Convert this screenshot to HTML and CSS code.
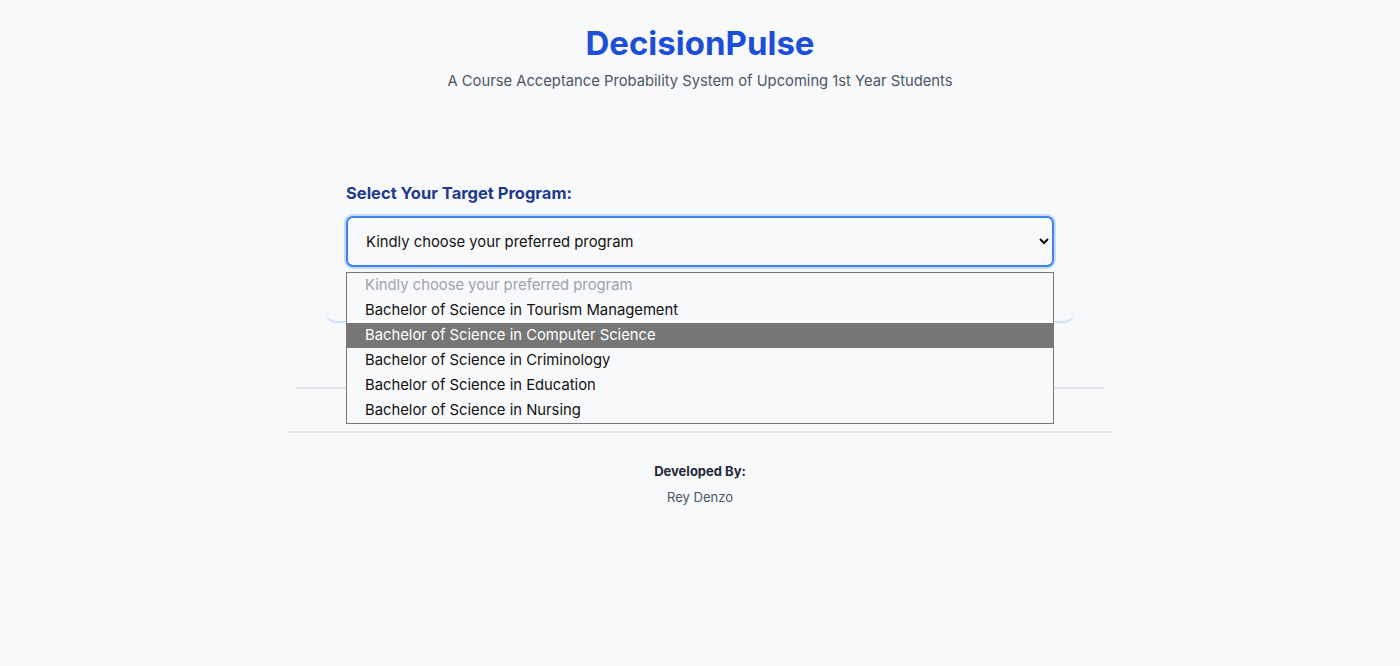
FILE: index.html
```html
<!DOCTYPE html>
<html lang="en">
<head>
    <meta charset="UTF-8">
    <meta name="viewport" content="width=device-width, initial-scale=1.0">
    <title>DecisionPulse</title>
    <link rel="stylesheet" href="styles.css">
</head>
<body>
    <header class="header">
        <h1 class="title">DecisionPulse</h1>
        <p class="subtitle">A Course Acceptance Probability System of Upcoming 1st Year Students</p>
    </header>

    <main class="container">
        <div class="form-card">
            <label class="field-label" for="program">Select Your Target Program:</label>
            <div class="select-wrap">
                <select class="program-select" id="program">
                    <option>Kindly choose your preferred program</option>
                    <option>Bachelor of Science in Tourism Management</option>
                    <option>Bachelor of Science in Computer Science</option>
                    <option>Bachelor of Science in Criminology</option>
                    <option>Bachelor of Science in Education</option>
                    <option>Bachelor of Science in Nursing</option>
                </select>
                <ul class="program-list">
                    <li class="placeholder">Kindly choose your preferred program</li>
                    <li>Bachelor of Science in Tourism Management</li>
                    <li class="active">Bachelor of Science in Computer Science</li>
                    <li>Bachelor of Science in Criminology</li>
                    <li>Bachelor of Science in Education</li>
                    <li>Bachelor of Science in Nursing</li>
                </ul>
            </div>
        </div>

        <div class="result-panel"></div>

        <footer class="footer">
            <div class="dev-label">Developed By:</div>
            <div class="dev-name">Rey Denzo</div>
        </footer>
    </main>
</body>
</html>
```

FILE: styles.css
```css
body {
    font-family: Inter, "Noto Sans", Arial, sans-serif;
    background-color: #f8f9fb;
    margin: 0;
    color: #111;
}

.header {
    text-align: center;
    padding-top: 23px;
}

.title {
    margin: 0;
    font-size: 33px;
    font-weight: 700;
    color: #1d4ed8;
    line-height: 40px;
}

.subtitle {
    margin: 8px 0 0;
    font-size: 14.75px;
    color: #4b5563;
    line-height: 20px;
}

.container {
    width: 826px;
    margin: 0 auto;
}

.form-card {
    margin: 90px 38px 0;
    padding: 0 21px 54px;
    border-bottom: 2px solid #cfe3fb;
    border-radius: 0 0 12px 12px;
}

.field-label {
    display: block;
    font-size: 16.5px;
    font-weight: 700;
    color: #1e3a8a;
    line-height: 24px;
}

.select-wrap {
    position: relative;
    margin-top: 11px;
}

.program-select {
    width: 100%;
    height: 51px;
    padding: 1px 14px 0;
    font-family: inherit;
    font-size: 14.8px;
    color: #111;
    background-color: #f8f9fb;
    border: 2px solid #3b82f6;
    border-radius: 7px;
    box-shadow: 0 0 0 2px rgba(59, 130, 246, 0.25);
    outline: none;
}

.program-list {
    position: absolute;
    top: 56px;
    left: 0;
    right: 0;
    margin: 0;
    padding: 0;
    list-style: none;
    background-color: #f8f9fb;
    border: 1px solid #767676;
    z-index: 5;
}

.program-list li {
    height: 25px;
    line-height: 25px;
    padding: 0 18px;
    font-size: 14.8px;
    color: #111;
}

.program-list .placeholder {
    color: #9ca3af;
}

.program-list .active {
    background-color: #767676;
    color: #fff;
}

.result-panel {
    margin: 64px 9px 0;
    height: 42px;
    border-top: 2px solid #e5e7eb;
}

.footer {
    border-top: 2px solid #e5e7eb;
    text-align: center;
    padding-top: 29px;
}

.dev-label {
    font-size: 13px;
    font-weight: 700;
    color: #1f2937;
    line-height: 18px;
}

.dev-name {
    margin-top: 8px;
    font-size: 13px;
    color: #4b5563;
    line-height: 18px;
}
```
